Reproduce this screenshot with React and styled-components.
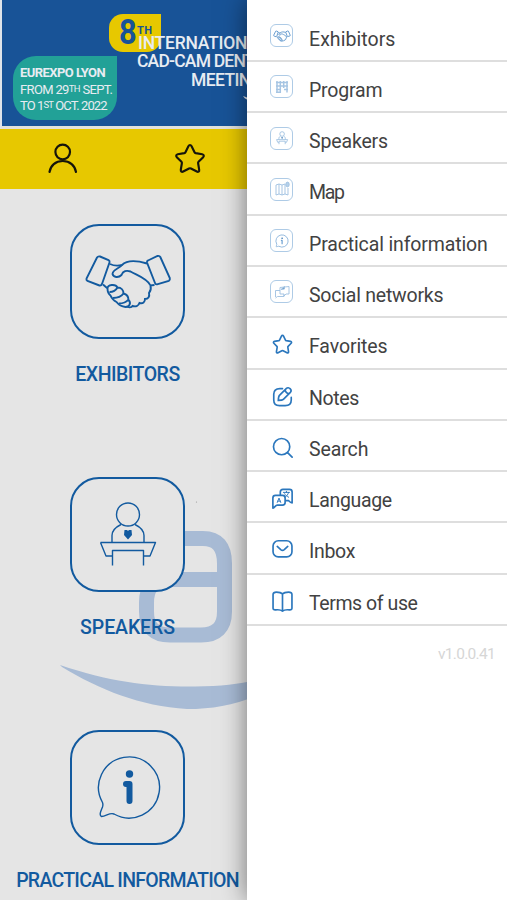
// src/App.jsx

import React from 'react';
import styled, { createGlobalStyle, ThemeProvider } from 'styled-components';

const theme = {
  colors: {
    primary: '#125a9f',
    banner: '#185397',
    teal: '#22a197',
    yellow: '#e7c800',
    background: '#e5e5e5',
    watermark: '#a8bbd5',
    menuIcon: '#2b77bd',
    tileBorder: '#aecbe6',
    text: '#424242',
    divider: '#dedede',
    version: '#d6d6d6',
  },
  font: 'Roboto, "Liberation Sans", sans-serif',
};

const GlobalStyle = createGlobalStyle`
  * {
    box-sizing: border-box;
  }
  body {
    margin: 0;
    font-family: ${({ theme }) => theme.font};
  }
`;

const Screen = styled.div`
  position: relative;
  width: 507px;
  height: 900px;
  overflow: hidden;
  background-color: ${({ theme }) => theme.colors.background};
`;

const Banner = styled.header`
  position: relative;
  height: 129px;
  padding: 34px 0 0 11px;
  display: flex;
  background-color: ${({ theme }) => theme.colors.banner};
  border-left: 2px solid #dfe4ea;
  border-bottom: 3px solid #e2e2dc;
  color: #e8ecf2;
`;

const Venue = styled.div`
  width: 104px;
  height: 64px;
  margin-top: 22px;
  padding: 9px 0 0 7px;
  border-radius: 23px 0 23px 23px;
  background-color: ${({ theme }) => theme.colors.teal};
`;

const VenueLine = styled.div`
  font-size: 13px;
  line-height: 15.7px;
  white-space: nowrap;
  font-weight: ${({ $bold }) => ($bold ? 700 : 400)};
  letter-spacing: ${({ $spacing }) => $spacing}px;

  small {
    font-size: 9.5px;
    vertical-align: 2px;
  }
`;

const Edition = styled.div`
  position: absolute;
  left: 107px;
  top: 14px;
  width: 52px;
  height: 38px;
  padding-left: 10px;
  display: flex;
  border-radius: 14px 0 14px 14px;
  background-color: ${({ theme }) => theme.colors.yellow};
  color: ${({ theme }) => theme.colors.banner};
  font-size: 35px;
  line-height: 37px;
  font-weight: 700;

  span {
    transform: scaleX(0.88);
    transform-origin: left;
  }
  small {
    margin: 11px 0 0 -2px;
    font-size: 11px;
    line-height: 12px;
    letter-spacing: 0.4px;
  }
`;

const Headline = styled.div`
  position: relative;
  margin-left: 18px;
  width: 115px;
`;

const HeadlineLine = styled.div`
  padding-left: ${({ $indent }) => $indent}px;
  font-size: 17.5px;
  line-height: 18.3px;
  font-weight: 500;
  letter-spacing: ${({ $spacing }) => $spacing}px;
  white-space: nowrap;
`;

const HeadlineTail = styled.svg`
  display: block;
  margin: 7px 0 0 108px;
`;

const TabBar = styled.nav`
  height: 60px;
  display: grid;
  grid-template-columns: repeat(4, 1fr);
  background-color: ${({ theme }) => theme.colors.yellow};
`;

const Tab = styled.div`
  display: flex;
  align-items: center;
  justify-content: center;
  color: #15150b;
`;

const Watermark = styled.svg`
  position: absolute;
  left: 55px;
  top: 495px;
`;

const Tiles = styled.main`
  position: relative;
  width: 255px;
  padding-top: 35px;
`;

const Tile = styled.section`
  height: 253px;
  display: flex;
  flex-direction: column;
  align-items: center;
`;

const TileFrame = styled.div`
  width: 115px;
  height: 115px;
  border: 2px solid ${({ theme }) => theme.colors.primary};
  border-radius: 29px;
  background-color: ${({ theme }) => theme.colors.background};

  svg {
    display: block;
    margin: -2px;
  }
`;

const TileLabel = styled.h2`
  margin: 24px 0 0;
  font-size: 19.5px;
  line-height: 24px;
  font-weight: 500;
  white-space: nowrap;
  color: ${({ theme }) => theme.colors.primary};
  letter-spacing: ${({ $spacing }) => $spacing}px;
`;

const Drawer = styled.aside`
  position: absolute;
  top: 0;
  right: 0;
  width: 260px;
  height: 900px;
  padding-top: 10.5px;
  background-color: #fff;
  box-shadow: 0 0 24px rgba(0, 0, 0, 0.5);
`;

const MenuItem = styled.div`
  height: 51.3px;
  padding-left: 23px;
  display: flex;
  border-bottom: 2px solid ${({ theme }) => theme.colors.divider};
`;

const MenuIcon = styled.div`
  width: 25px;
  height: 49px;
  margin-right: 14px;
  display: flex;
  align-items: center;
  justify-content: center;
  color: ${({ theme }) => theme.colors.menuIcon};
  padding: ${({ $framed }) => ($framed ? '1px 2px 0 0' : '4px 0 0')};
`;

const MiniFrame = styled.div`
  width: 23px;
  height: 23px;
  border: 1.5px solid ${({ theme }) => theme.colors.tileBorder};
  border-radius: 6px;
  display: flex;
  align-items: center;
  justify-content: center;
`;

const MenuLabel = styled.div`
  padding-top: 17px;
  font-size: 19.5px;
  line-height: 24px;
  white-space: nowrap;
  color: ${({ theme }) => theme.colors.text};
  letter-spacing: ${({ $spacing }) => $spacing}px;
`;

const Version = styled.div`
  padding: 18px 12px 0 0;
  font-size: 15.5px;
  line-height: 20px;
  letter-spacing: -0.7px;
  text-align: right;
  color: ${({ theme }) => theme.colors.version};
`;

const HandshakePaths = () => (
  <>
    <path d="M30 32.500l8.500 3.500q1.500 1 1 2.500L32 60q-1 2-2.500 1.500L17.500 57q-1.500-1-1-2.500L27 33.500q1-1.500 3-1z" />
    <path d="M78 36.500l9.500-4.500q2-.5 2.800 1l9.500 21q.5 2-1 2.800L87 60.300q-1.500.3-2-1.300L77 38.500q-.3-1.500 1-2z" />
    <path d="M40 40c4 2 8 2 12 1c5-5 13-5 25-1.500" />
    <path d="M52 41c-3 4-9 4-9.500 9c1 3.500 6 4 9 1c1.500-4 5-5 9-3.500c7 4 17 7 20 14l4-.5" />
    <path d="M33 60.500l4.500 4c0-4 8-5 10-1c4 0 6 3 6 6c4 1 5 4 5 6.500c3 3 1 7-3 7c-4-.5-7-2.500-9-5c-3-1.500-5-4-6-6.500c-2-1.500-3-4-3-7M39.500 68c3 0 6-1 8-4.500M43 74c4 0 8-1 10.500-4.500M49 79.500c4 0 7-1 9.500-4" />
    <path d="M80.500 62c1 3 0 5-1.500 7c1 4-1 6-4 6c0 3-2 5-5.500 4c-1 3-4 4-7 3c-1 1.500-4 1.500-6 .5" />
  </>
);

const SpeakerPaths = () => (
  <>
    <circle cx="58" cy="37.500" r="11.500" />
    <path d="M51 47.500c-6 3-9 7-9 11v6.500M65 47.500c6 3 9 7 9 11v6.500" />
    <path d="M54.500 53h2.500l1 1l1-1h2.500l.5 5l-4 4.500l-4-4.500z" fill="currentColor" stroke="none" />
    <path d="M30.500 65.500h55l-5.500 13.500h-6M30.500 65.500l5.500 13.500h6M42.500 88.500V73.500h31v15" strokeLinejoin="round" />
  </>
);

const InfoPaths = () => (
  <>
    <path d="M32.500 72.500a30.500 30.500 0 1 1 11.500 11.500c-4-2-8 2.500-12.500 2.500c-3-1 0-7 1-9.500q.8-2.500 0-4.500z" />
    <circle cx="59.500" cy="44" r="3.700" fill="currentColor" stroke="none" />
    <path d="M56 54h3.500v17" strokeWidth="6" strokeLinecap="round" strokeLinejoin="round" />
  </>
);

const tileArt = {
  handshake: HandshakePaths,
  speaker: SpeakerPaths,
  info: InfoPaths,
};

const TileArt = ({ name }) => {
  const Paths = tileArt[name];
  return (
    <svg width="115" height="115" viewBox="0 0 115 115" fill="none" stroke="#125a9f" color="#125a9f" strokeWidth={name === 'handshake' ? 1.9 : 1.4}>
      <Paths />
    </svg>
  );
};

const miniArt = {
  handshake: <g transform="translate(-1.700 -1.500) scale(.2)" strokeWidth="5"><HandshakePaths /></g>,
  speaker: <g transform="translate(-1.500 -1.500) scale(.2)" strokeWidth="4" opacity=".7"><SpeakerPaths /></g>,
  info: <g transform="translate(-1.800 -1.500) scale(.2)" strokeWidth="3.500"><InfoPaths /></g>,
  program: (
    <g strokeWidth="1.500" opacity=".6">
      <path d="M4 5.500h12M4 9h12M4 12.500h5M12 12.500h4M4 15.200h5M5 4v11.500M8.300 4v11.500M11.700 4v7M15 4v11.500" />
    </g>
  ),
  map: (
    <g strokeWidth=".9" opacity=".65">
      <path d="M4 6l3-1l3 1l3-1v10l-3 1l-3-1l-3 1zM7 5v10M10 6v10M16 9v7l-3-1" />
      <ellipse cx="15.500" cy="5.500" rx="1.700" ry="2.400" fill="#8fb9e0" />
    </g>
  ),
  social: (
    <g strokeWidth=".9" opacity=".65">
      <path d="M8 5.500l9-1v7.500h-3l-2 2v-2H8zM8 8.500H3.500v6.500M3.500 16l2-1.500H12v-2" />
      <path d="M9 7.500l3.500-3v2.500z" fill="currentColor" />
    </g>
  ),
};

const MiniArt = ({ name }) => (
  <svg width="20" height="20" viewBox="0 0 20 20" fill="none" stroke="#6b9fd1" color="#155fa6">
    {miniArt[name]}
  </svg>
);

const STAR = 'M12 1.500c.5 0 .9.300 1.200.900l2.200 4.500c.2.400.5.600.900.700l4.900.8c1.200.2 1.500 1.400.7 2.200l-3.500 3.500c-.3.300-.4.700-.3 1.100l.8 4.900c.2 1.200-.8 1.900-1.800 1.300l-4.400-2.300a1.500 1.500 0 0 0-1.400 0l-4.400 2.300c-1 .6-2-.1-1.800-1.300l.8-4.900c.1-.4 0-.8-.3-1.100l-3.500-3.500c-.8-.8-.5-2 .7-2.200l4.900-.8c.4-.1.7-.3.9-.7l2.200-4.500c.3-.6.7-.9 1.200-.9z';

const lineArt = {
  star: <path d={STAR} />,
  notes: (
    <>
      <path d="M12 3H9C4 3 2 5 2 9.500v6.500c0 4.500 2 6.500 6.500 6.500h6.500c5 0 7-2 7-6.500v-3" />
      <path d="M16.500 2.700l-8 8c-1 1-1.200 3.500-1.300 5.800c2.300-.1 4.800-.3 5.800-1.300l8-8c2.500-2.500-2-7-4.500-4.500zM14.800 4.500c.6 2.200 2.200 3.800 4.400 4.400" />
    </>
  ),
  search: (
    <>
      <circle cx="11" cy="11" r="9.300" />
      <path d="M17.800 17.800L23 23" />
    </>
  ),
  language: (
    <>
      <path d="M9.500 8V4.500c0-2 1-3 3-3H20c2 0 3 1 3 3V17c-2-.2-3-1.500-4-2.500h-3" strokeLinejoin="round" />
      <path d="M1 23V11.500c0-2 1-3 3-3h8c2 0 3 1 3 3v5c0 2-1 3-3 3H6c-2 0-3 3-5 3.500z" strokeLinejoin="round" />
      <path d="M6 16.500l2-5l2 5M6.700 15h2.600M13 5h7M16.500 3.800V5M19 5c-1 3-2 4-3.500 5M14.500 6.500c1 2 2.500 3 4.500 4" strokeWidth="1.100" />
    </>
  ),
  inbox: (
    <>
      <rect x="1.200" y="2" width="21.600" height="18.500" rx="6" />
      <path d="M6 8.500l4 3.600c1.300 1.100 2.700 1.100 4 0l4-3.600" />
    </>
  ),
  book: (
    <path d="M12 3.300C10.500 1.700 8 1.200 5 1.200C2.500 1.200 1.200 2.300 1.200 4v15.700c0 1.500 1 2 3 1.800c3-.3 6-.2 7.800 1.500c1.800-1.700 4.800-1.800 7.800-1.500c2 .2 3-.3 3-1.800V4c0-1.700-1.300-2.800-3.800-2.800c-3 0-5.500.5-7 2.100zM12 3.300V23" strokeLinejoin="round" />
  ),
};

const LineArt = ({ name, size = 21, width = 1.9 }) => (
  <svg width={size} height={size} viewBox="0 0 24 24" fill="none" stroke="currentColor" strokeWidth={width} strokeLinecap="round">
    {lineArt[name]}
  </svg>
);

const tiles = [
  { label: 'EXHIBITORS', art: 'handshake', spacing: -0.5 },
  { label: 'SPEAKERS', art: 'speaker', spacing: -0.1 },
  { label: 'PRACTICAL INFORMATION', art: 'info', spacing: -0.72 },
];

const menu = [
  { label: 'Exhibitors', icon: 'handshake', framed: true, spacing: 0.05 },
  { label: 'Program', icon: 'program', framed: true, spacing: -0.2 },
  { label: 'Speakers', icon: 'speaker', framed: true, spacing: -0.15 },
  { label: 'Map', icon: 'map', framed: true, spacing: -1.3 },
  { label: 'Practical information', icon: 'info', framed: true, spacing: -0.14 },
  { label: 'Social networks', icon: 'social', framed: true, spacing: -0.22 },
  { label: 'Favorites', icon: 'star', spacing: -0.1 },
  { label: 'Notes', icon: 'notes', spacing: -0.35 },
  { label: 'Search', icon: 'search', spacing: -0.1 },
  { label: 'Language', icon: 'language', spacing: -0.33 },
  { label: 'Inbox', icon: 'inbox', spacing: -0.3 },
  { label: 'Terms of use', icon: 'book', spacing: -0.42 },
];

const App = () => (
  <ThemeProvider theme={theme}>
    <GlobalStyle />
    <Screen>
      <Banner>
        <Edition>
          <span>8</span>
          <small>TH</small>
        </Edition>
        <Venue>
          <VenueLine $bold $spacing={-0.55}>EUREXPO LYON</VenueLine>
          <VenueLine $spacing={-0.65}>FROM 29<small>TH</small> SEPT.</VenueLine>
          <VenueLine $spacing={-0.9}>TO 1<small>ST</small> OCT. 2022</VenueLine>
        </Venue>
        <Headline>
          <HeadlineLine $indent={3} $spacing={-0.25}>INTERNATION</HeadlineLine>
          <HeadlineLine $indent={2} $spacing={-0.8}>CAD-CAM DENT</HeadlineLine>
          <HeadlineLine $indent={56} $spacing={-0.6}>MEETIN</HeadlineLine>
          <HeadlineTail width="8" height="5" viewBox="0 0 8 5">
            <path d="M0 0c2 3 4 4 8 4V2C5 2 3 1 0 0z" fill="#e8ecf2" />
          </HeadlineTail>
        </Headline>
      </Banner>
      <TabBar>
        <Tab>
          <svg width="32" height="32" viewBox="0 0 32 32" fill="none" stroke="currentColor" strokeWidth="2.200" strokeLinecap="round">
            <circle cx="15.700" cy="9" r="7.300" />
            <path d="M2.500 29c1-6.500 6-11 13.200-11s12.300 4.500 13.300 11" />
          </svg>
        </Tab>
        <Tab>
          <LineArt name="star" size={32} width={1.6} />
        </Tab>
      </TabBar>
      <Watermark width="240" height="230" viewBox="55 495 240 230">
        <g fill="none" stroke={theme.colors.watermark} strokeWidth="15">
          <path d="M165 538.500h38q21.500 0 21.500 25v48q0 23.500-23.500 23.500h-31q-23.500 0-23.500-23.500v-9q0-23 22-23h56" />
        </g>
        <path d="M60 665C110 682 150 687 195 686.500S260 680 295 668v8C255 700 225 709 187 709C140 706 100 690 62 667z" fill={theme.colors.watermark} />
        <circle cx="196.500" cy="502" r=".6" fill="#999" />
      </Watermark>
      <Tiles>
        {tiles.map((tile) => (
          <Tile key={tile.label}>
            <TileFrame>
              <TileArt name={tile.art} />
            </TileFrame>
            <TileLabel $spacing={tile.spacing}>{tile.label}</TileLabel>
          </Tile>
        ))}
      </Tiles>
      <Drawer>
        {menu.map((item) => (
          <MenuItem key={item.label}>
            <MenuIcon $framed={item.framed}>
              {item.framed ? (
                <MiniFrame>
                  <MiniArt name={item.icon} />
                </MiniFrame>
              ) : (
                <LineArt name={item.icon} />
              )}
            </MenuIcon>
            <MenuLabel $spacing={item.spacing}>{item.label}</MenuLabel>
          </MenuItem>
        ))}
        <Version>v1.0.0.41</Version>
      </Drawer>
    </Screen>
  </ThemeProvider>
);

export default App;
